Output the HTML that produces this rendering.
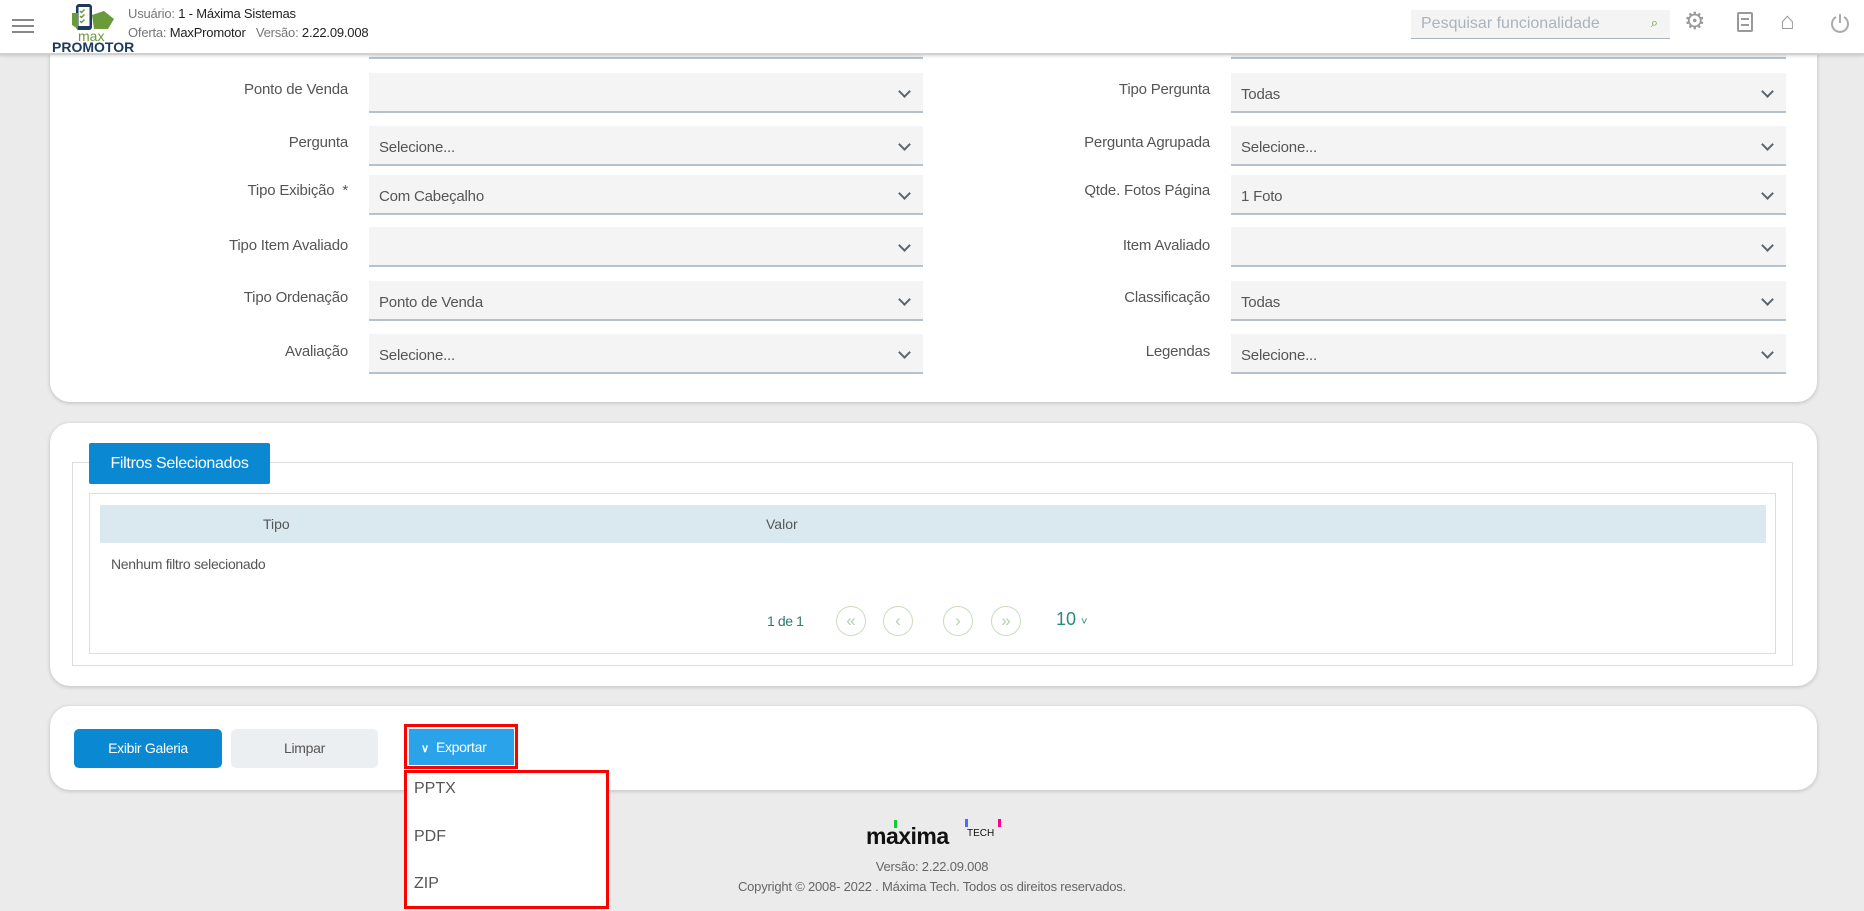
<!DOCTYPE html>
<html><head><meta charset="utf-8"><style>
*{box-sizing:border-box;margin:0;padding:0}
body{width:1864px;height:911px;background:#ebebeb;font-family:"Liberation Sans",sans-serif;position:relative;overflow:hidden;color:#555}
.abs{position:absolute}
.hdr{left:0;top:0;width:1864px;height:55px;background:#fff;border-bottom:2px solid #d0d0d0;box-shadow:0 1px 3px rgba(0,0,0,.15);z-index:5}
.card{background:#fff;border-radius:20px;box-shadow:0 1px 4px rgba(0,0,0,.2)}
.lbl{font-size:15px;color:#555;text-align:right;width:300px;letter-spacing:-0.2px}
.sel{background:#f4f4f4;border-bottom:2px solid #b6c2cc;height:40px;font-size:15px;color:#555;padding:13px 10px 0;letter-spacing:-0.2px}
.sel:after{content:"";position:absolute;right:14px;top:14px;width:7px;height:7px;border-right:2px solid #5a6570;border-bottom:2px solid #5a6570;transform:rotate(45deg)}
.circ{width:30px;height:30px;border:1px solid #c9dcc0;border-radius:50%;color:#b7cfae;font-size:17px;text-align:center;line-height:27px}
.btn{height:39px;border-radius:5px;font-size:14px;text-align:center;line-height:39px;letter-spacing:-0.3px}
</style></head><body>
<div class="abs hdr">
 <div class="abs" style="left:12px;top:19px;width:22px;height:2px;background:#888;box-shadow:0 6px 0 #888,0 12px 0 #888"></div>
 <svg class="abs" style="left:70px;top:3px" width="46" height="32" viewBox="0 0 46 32">
  <rect x="6" y="1" width="16" height="26" rx="3" fill="#1b3a5c"/><rect x="8.5" y="4" width="11" height="19" fill="#fff"/>
  <path d="M10 8l1.5 1.5 3-3M10 13l1.5 1.5 3-3M10 18l1.5 1.5 3-3" stroke="#6b9a3a" stroke-width="1.5" fill="none"/>
  <path d="M22 12l12-4 10 8-6 10-14 0z" fill="#6b9a3a"/><path d="M2 10l6 0 0 16-6-4z" fill="#6b9a3a"/>
 </svg>
 <div class="abs" style="left:78px;top:28px;font-size:14px;color:#6b9a3a">max</div>
 <div class="abs" style="left:52px;top:39px;font-size:14px;font-weight:bold;color:#1b3a5c">PROMOTOR</div>
 <div class="abs" style="left:128px;top:6px;font-size:13px;color:#777;letter-spacing:-0.2px">Usuário: <span style="color:#222">1 - Máxima Sistemas</span></div>
 <div class="abs" style="left:128px;top:25px;font-size:13px;color:#777;letter-spacing:-0.2px">Oferta: <span style="color:#222">MaxPromotor</span>&nbsp;&nbsp; Versão: <span style="color:#222">2.22.09.008</span></div>
 <div class="abs" style="left:1411px;top:10px;width:259px;height:29px;background:#f4f4f4;border-bottom:1px solid #aab6c0;font-size:16px;color:#aab4bc;padding:5px 10px">Pesquisar funcionalidade<span class="abs" style="right:12px;top:5px;color:#6b9a3a;font-size:13px">⌕</span></div>
 <div class="abs" style="left:1684px;top:7px;font-size:24px;color:#999">⚙</div>
 <div class="abs" style="left:1737px;top:12px;width:16px;height:20px;border:2px solid #999;border-radius:2px"></div>
 <div class="abs" style="left:1741px;top:18px;width:8px;height:8px;border-top:2px solid #999;border-bottom:2px solid #999"></div>
 <div class="abs" style="left:1780px;top:8px;font-size:24px;color:#999">⌂</div>
 <svg class="abs" style="left:1830px;top:12px" width="20" height="22"><path d="M6 5a8 8 0 1 0 8 0M10 2v9" stroke="#aaa" stroke-width="2" fill="none"/></svg>
</div>

<div class="abs card" style="left:50px;top:20px;width:1767px;height:382px"></div>
<div class="abs" style="left:369px;top:55px;width:554px;height:4px;border-bottom:2px solid #b6c2cc;background:#f4f4f4"></div>
<div class="abs" style="left:1231px;top:55px;width:555px;height:4px;border-bottom:2px solid #b6c2cc;background:#f4f4f4"></div>

<div class="abs lbl" style="left:48px;top:81px">Ponto de Venda</div><div class="abs sel" style="left:369px;top:73px;width:554px"></div>
<div class="abs lbl" style="left:910px;top:81px">Tipo Pergunta</div><div class="abs sel" style="left:1231px;top:73px;width:555px">Todas</div>
<div class="abs lbl" style="left:48px;top:134px">Pergunta</div><div class="abs sel" style="left:369px;top:126px;width:554px">Selecione...</div>
<div class="abs lbl" style="left:910px;top:134px">Pergunta Agrupada</div><div class="abs sel" style="left:1231px;top:126px;width:555px">Selecione...</div>
<div class="abs lbl" style="left:48px;top:182px">Tipo Exibição &nbsp;*</div><div class="abs sel" style="left:369px;top:175px;width:554px">Com Cabeçalho</div>
<div class="abs lbl" style="left:910px;top:182px">Qtde. Fotos Página</div><div class="abs sel" style="left:1231px;top:175px;width:555px">1 Foto</div>
<div class="abs lbl" style="left:48px;top:237px">Tipo Item Avaliado</div><div class="abs sel" style="left:369px;top:227px;width:554px"></div>
<div class="abs lbl" style="left:910px;top:237px">Item Avaliado</div><div class="abs sel" style="left:1231px;top:227px;width:555px"></div>
<div class="abs lbl" style="left:48px;top:289px">Tipo Ordenação</div><div class="abs sel" style="left:369px;top:281px;width:554px">Ponto de Venda</div>
<div class="abs lbl" style="left:910px;top:289px">Classificação</div><div class="abs sel" style="left:1231px;top:281px;width:555px">Todas</div>
<div class="abs lbl" style="left:48px;top:343px">Avaliação</div><div class="abs sel" style="left:369px;top:334px;width:554px">Selecione...</div>
<div class="abs lbl" style="left:910px;top:343px">Legendas</div><div class="abs sel" style="left:1231px;top:334px;width:555px">Selecione...</div>

<div class="abs card" style="left:50px;top:423px;width:1767px;height:263px"></div>
<div class="abs" style="left:72px;top:462px;width:1721px;height:204px;border:1px solid #ddd"></div>
<div class="abs" style="left:89px;top:443px;width:181px;height:41px;background:#0a88d1;border-radius:2px;color:#fff;font-size:16px;line-height:41px;text-align:center;letter-spacing:-0.3px">Filtros Selecionados</div>
<div class="abs" style="left:89px;top:493px;width:1687px;height:161px;border:1px solid #ddd"></div>
<div class="abs" style="left:100px;top:505px;width:1666px;height:38px;background:#dae8f0"></div>
<div class="abs" style="left:263px;top:516px;font-size:14px;color:#555">Tipo</div>
<div class="abs" style="left:766px;top:516px;font-size:14px;color:#555">Valor</div>
<div class="abs" style="left:111px;top:556px;font-size:14px;color:#555;letter-spacing:-0.3px">Nenhum filtro selecionado</div>
<div class="abs" style="left:767px;top:613px;font-size:14px;color:#2d7a6f;letter-spacing:-0.4px">1 de 1</div>
<div class="abs circ" style="left:836px;top:606px">«</div>
<div class="abs circ" style="left:883px;top:606px">‹</div>
<div class="abs circ" style="left:943px;top:606px">›</div>
<div class="abs circ" style="left:991px;top:606px">»</div>
<div class="abs" style="left:1056px;top:609px;font-size:18px;color:#2d8a7a">10 <span style="font-size:11px">˅</span></div>

<div class="abs card" style="left:50px;top:706px;width:1767px;height:84px"></div>
<div class="abs btn" style="left:74px;top:729px;width:148px;background:#0a88d1;color:#fff">Exibir Galeria</div>
<div class="abs btn" style="left:231px;top:729px;width:147px;background:#eceff2;color:#555">Limpar</div>
<div class="abs" style="left:404px;top:724px;width:114px;height:45px;border:3px solid #f00"></div>
<div class="abs" style="left:409px;top:729px;width:105px;height:36px;background:#2aa3ea;color:#fff;font-size:14px;line-height:36px;padding-left:12px;letter-spacing:-0.3px"><b style="font-size:11px">&#x2228;</b>&nbsp; Exportar</div>

<div class="abs" style="left:404px;top:770px;width:205px;height:139px;background:#fff;border:3px solid #f00"></div>
<div class="abs" style="left:414px;top:780px;font-size:16px;color:#555">PPTX</div>
<div class="abs" style="left:414px;top:828px;font-size:16px;color:#555">PDF</div>
<div class="abs" style="left:414px;top:875px;font-size:16px;color:#555">ZIP</div>

<div class="abs" style="left:866px;top:823px;font-size:23px;font-weight:bold;color:#111;letter-spacing:-0.5px">maxima</div>
<div class="abs" style="left:967px;top:828px;font-size:10px;color:#111">TECH</div>
<div class="abs" style="left:894px;top:820px;width:3px;height:8px;background:#1c3"></div>
<div class="abs" style="left:965px;top:819px;width:3px;height:8px;background:#56f"></div>
<div class="abs" style="left:998px;top:819px;width:3px;height:8px;background:#f08"></div>
<div class="abs" style="left:0;top:859px;width:1864px;text-align:center;font-size:13px;color:#666;letter-spacing:-0.2px">Versão: 2.22.09.008</div>
<div class="abs" style="left:0;top:879px;width:1864px;text-align:center;font-size:13px;color:#666;letter-spacing:-0.2px">Copyright © 2008- 2022 . Máxima Tech. Todos os direitos reservados.</div>
</body></html>
